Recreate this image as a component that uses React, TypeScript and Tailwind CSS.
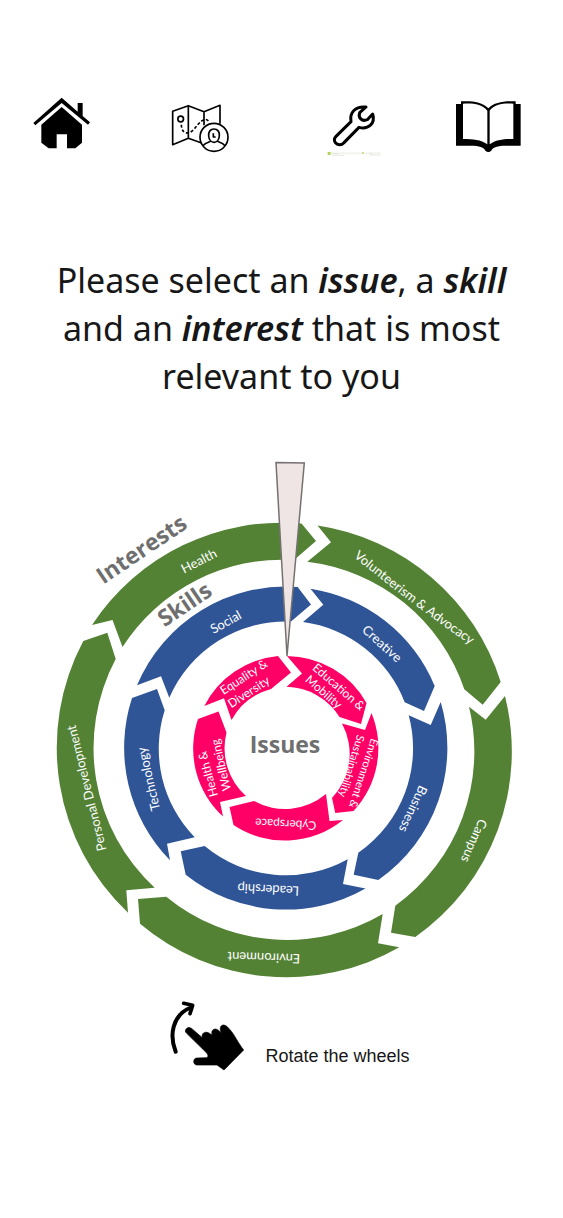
import React from "react";

type Label = { x: number; y: number; angle: number; text: string; bend?: number; small?: boolean };

const GREEN = "#548235";
const BLUE = "#2f5597";
const PINK = "#ff0066";

// Each segment runs clockwise: outer tail, outer head, tip, inner head, inner tail, notch.
type Segment = [number, number, number, number, number, number, number, number, number, number, number, number];

type Ring = {
  name: string;
  color: string;
  textClass: string;
  outer: number;
  inner: number;
  segments: Segment[];
  labels: Label[];
};

const rings: Ring[] = [
  {
    name: "Interests",
    color: GREEN,
    textClass: "text-[13px]",
    outer: 227,
    inner: 190,
    segments: [
      [92, 625, 301.5, 523.5, 316, 541, 294, 560, 122.5, 647, 112.5, 620],
      [317.5, 525.5, 500.7, 682, 482.7, 704.7, 464.3, 689.3, 307.3, 561.7, 331, 542.3],
      [505, 696, 415.3, 937, 391, 932.7, 395.3, 905.7, 469, 706.7, 485.7, 719.7],
      [399.3, 947.3, 140, 923.7, 138, 899, 166.3, 896.7, 382.7, 914, 378, 943.3],
      [128, 912.7, 83.3, 641, 107.3, 632.7, 115.7, 659, 154.7, 887.7, 126.3, 890.3],
    ],
    labels: [
      { x: 201, y: 565, angle: -27, text: "Health" },
      { x: 411, y: 602, angle: 37, text: "Volunteerism & Advocacy", bend: -3 },
      { x: 470, y: 839, angle: 114, text: "Campus" },
      { x: 264, y: 953, angle: 182, text: "Environment" },
      { x: 91, y: 787, angle: -104, text: "Personal Development" },
    ],
  },
  {
    name: "Skills",
    color: BLUE,
    textClass: "text-[13px]",
    outer: 161,
    inner: 127,
    segments: [
      [137, 685.3, 297.7, 587, 311, 604.5, 291, 621.5, 169.3, 697.7, 161, 676.3],
      [310.5, 588.7, 434.7, 686, 424, 711, 404.7, 702.3, 303, 622, 323.3, 604.7],
      [440.7, 702, 378.3, 880, 353.7, 874.7, 358.3, 852.7, 408.7, 715.3, 430.7, 725],
      [365.5, 888.5, 185.7, 874.7, 180.7, 851.3, 204.7, 846, 347.7, 859.3, 343, 884],
      [170, 860.3, 132, 698, 157, 689, 164.7, 710.3, 194.7, 837.3, 167, 843.7],
    ],
    labels: [
      { x: 228, y: 626, angle: -29, text: "Social" },
      { x: 379, y: 647, angle: 42, text: "Creative" },
      { x: 409, y: 807, angle: 115, text: "Business" },
      { x: 268.5, y: 885, angle: 183, text: "Leadership" },
      { x: 153, y: 778, angle: -103, text: "Technology" },
    ],
  },
  {
    name: "Issues",
    color: PINK,
    textClass: "text-[12px]",
    outer: 92.3,
    inner: 64,
    segments: [
      [204.3, 706, 278, 656, 291, 672.5, 271, 689, 231.5, 720, 224, 698.3],
      [287, 656, 366.5, 703, 361, 724, 339.5, 717, 286.5, 686.8, 302, 673.5],
      [371.5, 713, 353.5, 811, 335.3, 813, 332, 798, 342, 723.5, 365, 730],
      [343, 820, 233.5, 825, 229.5, 807, 254, 801, 326, 794, 329.5, 821],
      [223, 816.5, 198, 719, 218.5, 711.5, 226.5, 732.5, 246, 796, 220, 802],
    ],
    labels: [
      { x: 246, y: 680.5, angle: -33, text: "Equality &" },
      { x: 251, y: 695.5, angle: -33, text: "Diversity" },
      { x: 336, y: 690, angle: 41, text: "Education &" },
      { x: 321, y: 695, angle: 41, text: "Mobility" },
      { x: 360, y: 772, angle: 108, text: "Environment &", small: true },
      { x: 348, y: 765, angle: 107, text: "Sustainability", small: true },
      { x: 286, y: 820, angle: 183, text: "Cyberspace" },
      { x: 212, y: 773, angle: -105, text: "Health &" },
      { x: 225, y: 764, angle: -103, text: "Wellbeing" },
    ],
  },
];

function segmentPath(s: Segment, outer: number, inner: number) {
  return `M${s[0]} ${s[1]}A${outer} ${outer} 0 0 1 ${s[2]} ${s[3]}L${s[4]} ${s[5]}L${s[6]} ${s[7]}A${inner} ${inner} 0 0 0 ${s[8]} ${s[9]}L${s[10]} ${s[11]}Z`;
}

function RingLabel({ label, id }: { label: Label; id: string }) {
  const transform = `translate(${label.x} ${label.y}) rotate(${label.angle})`;
  if (!label.bend) {
    return (
      <text transform={transform} textAnchor="middle" className={label.small ? "text-[11px]" : undefined}>
        {label.text}
      </text>
    );
  }
  return (
    <g transform={transform}>
      <path id={id} d={`M-100 ${label.bend}Q0 ${-label.bend} 100 ${label.bend}`} fill="none" />
      <text textAnchor="middle">
        <textPath href={`#${id}`} startOffset="50%">
          {label.text}
        </textPath>
      </text>
    </g>
  );
}

function Wheels() {
  return (
    <svg viewBox="0 450 563 540" className="block w-full" role="img" aria-label="Wheels of issues, skills and interests">
      {rings.map((ring) => (
        <g key={ring.name}>
          {ring.segments.map((s, i) => (
            <path key={i} d={segmentPath(s, ring.outer, ring.inner)} fill={ring.color} />
          ))}
          <g className={`fill-white font-['Lato',sans-serif] ${ring.textClass}`}>
            {ring.labels.map((label) => (
              <RingLabel key={label.text} label={label} id={`${ring.name}-${label.x}`} />
            ))}
          </g>
        </g>
      ))}
      <g className="fill-[#6f6f6f] font-['Open_Sans',sans-serif] text-[23px] font-bold" textAnchor="middle">
        <text x="285" y="753">Issues</text>
        <text transform="translate(189 611) rotate(-34)">Skills</text>
        <text transform="translate(146 556) rotate(-34)">Interests</text>
      </g>
      <path d="M276 462.5L304.300 463L287 656Z" fill="#efe5e4" stroke="#767171" strokeWidth="1.5" />
    </svg>
  );
}

function HomeIcon() {
  return (
    <svg viewBox="24 30 198 195" className="w-[66px]" aria-hidden="true">
      <path d="M40 114L125 38L173 80V54H188V93L210 112L204 119L125 54L46 121Z" />
      <path d="M64 119L125 66L186 119V173L166 190H141V148H110V190H86L64 173Z" />
    </svg>
  );
}

function MapIcon() {
  return (
    <svg viewBox="438 30 198 195" className="w-[66px]" fill="none" stroke="#000" strokeWidth="5" strokeLinejoin="round" aria-hidden="true">
      <path d="M545 174L505 160L458 179V79L505 62L552 80L600 61V116M505 62V160M552 80V121" />
      <circle cx="482" cy="102" r="8.500" />
      <path d="M484 119C485 149 506 149 521 134C537 115 552 92 568 110" strokeDasharray="9 6" />
      <circle cx="582" cy="157" r="42" fill="#fff" />
      <path d="M582 132C571 132 565 140 566 153C567 166 575 172 582 172C589 172 597 166 598 153C599 140 593 132 582 132ZM549 182C556 173 565 172 572 169M615 182C608 173 599 172 592 169M580 145V156H587" />
    </svg>
  );
}

function WrenchIcon() {
  return (
    <svg viewBox="33 30 198 195" className="w-[66px]" fill="none" aria-hidden="true">
      <path
        d="M78 154L123 110C118 82 136 63 168 66L149 83C144 98 155 111 172 104L188 87C197 116 175 134 147 127L102 173C94 182 82 181 76 173C72 167 73 159 78 154Z"
        stroke="#000"
        strokeWidth="9"
        strokeLinejoin="round"
      />
      <path d="M53 205H213" stroke="#f3f4ef" strokeWidth="6" />
      <path d="M53 201H62V210H53ZM156 202H161V206H156Z" fill="#b4d45a" />
      <path d="M65 206H87M66 211H103M178 206H186M178 210H210" stroke="#dcded8" strokeWidth="2" />
    </svg>
  );
}

function BookIcon() {
  return (
    <svg viewBox="435 30 198 195" className="w-[66px]" aria-hidden="true">
      <path d="M438 57H453V49C486 47 517 51 535 70C553 51 584 47 617 49V57H632V182H588C562 182 548 187 544 197Q535 205 526 197C522 187 508 182 482 182H438Z" />
      <path d="M459 56C490 54 517 58 532 77V178C512 164 490 162 459 162ZM539 77C553 58 580 54 610 56V162C580 162 558 164 539 178Z" fill="#fff" />
    </svg>
  );
}

function RotateIcon() {
  return (
    <svg viewBox="30 30 228 213" className="w-[76px] shrink-0" aria-hidden="true">
      <path d="M50 185C31 138 39 77 92 54" fill="none" stroke="#000" strokeWidth="12" strokeLinecap="round" />
      <path d="M74 40L101 46L93 71" fill="none" stroke="#000" strokeWidth="11" strokeLinecap="round" strokeLinejoin="round" />
      <path d="M82 116C89 109 97 114 102 119L131 144C126 135 133 125 144 127C150 128 154 132 160 136C156 125 160 118 169 117C176 117 181 124 187 128C181 115 184 106 193 105C202 105 207 113 213 119C226 133 236 157 254 180L195 240L174 225H114C101 225 101 204 114 204L144 203C149 199 147 193 141 187L83 130C78 125 78 120 82 116Z" stroke="#000" strokeWidth="2" />
    </svg>
  );
}

const links = [
  { label: "Home", href: "#home", icon: <HomeIcon /> },
  { label: "Map", href: "#map", icon: <MapIcon /> },
  { label: "Tools", href: "#tools", icon: <WrenchIcon /> },
  { label: "Library", href: "#library", icon: <BookIcon /> },
];

export default function App() {
  return (
    <div className="min-h-screen bg-white pt-[95px] pb-12">
      <nav className="grid grid-cols-[138fr_155fr_134fr_108fr] pl-7" aria-label="Main">
        {links.map((l) => (
          <a key={l.label} href={l.href} aria-label={l.label} className="block w-[66px]">
            {l.icon}
          </a>
        ))}
      </nav>
      <main>
        <h1 className="mt-24 text-center font-['Noto_Sans',sans-serif] text-[34px] leading-[48px] font-normal text-[#171717]">
          Please select an <em className="font-semibold">issue</em>, a <em className="font-semibold">skill</em>
          <br />
          and an <em className="font-semibold">interest</em> that is most
          <br />
          relevant to you
        </h1>
        <div className="mt-[50px]">
          <Wheels />
        </div>
        <div className="mt-[10px] flex items-center justify-center gap-5 pl-4">
          <RotateIcon />
          <p className="pt-10 font-['Liberation_Sans',sans-serif] text-[18px] leading-6 text-[#171717]">Rotate the wheels</p>
        </div>
      </main>
    </div>
  );
}
